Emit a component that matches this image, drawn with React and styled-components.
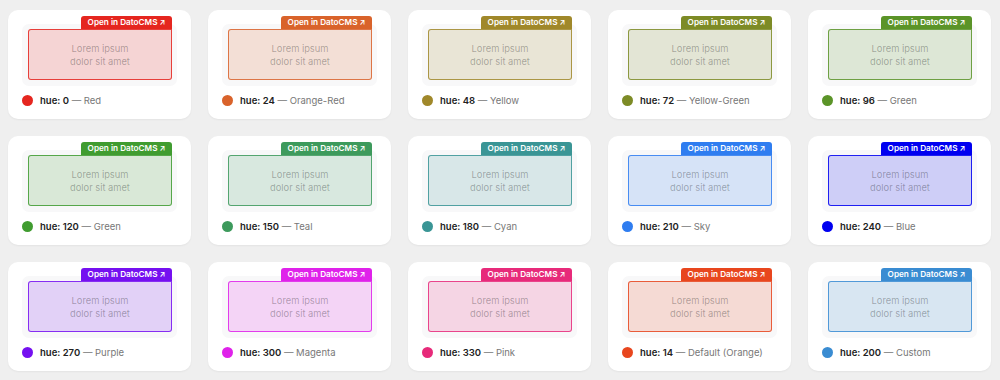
import React from "react";
import styled, { createGlobalStyle } from "styled-components";

const swatches = [
    { hue: 0, name: "Red", color: "#e5261f" },
    { hue: 24, name: "Orange-Red", color: "#d9632b" },
    { hue: 48, name: "Yellow", color: "#a0882a" },
    { hue: 72, name: "Yellow-Green", color: "#7d8b26" },
    { hue: 96, name: "Green", color: "#5b9428" },
    { hue: 120, name: "Green", color: "#409c30" },
    { hue: 150, name: "Teal", color: "#3d9a5c" },
    { hue: 180, name: "Cyan", color: "#3a9595" },
    { hue: 210, name: "Sky", color: "#2f7df0" },
    { hue: 240, name: "Blue", color: "#0000f0" },
    { hue: 270, name: "Purple", color: "#7510f0" },
    { hue: 300, name: "Magenta", color: "#df22ea" },
    { hue: 330, name: "Pink", color: "#e72a7a" },
    { hue: 14, name: "Default (Orange)", color: "#e8461e" },
    { hue: 200, name: "Custom", color: "#3a8cd2" },
];

function App() {
    return (
        <>
            <GlobalStyle />
            <Grid>
                {swatches.map((s) => (
                    <Card key={s.hue}>
                        <Preview>
                            <Frame>
                                <Tab accent={s.color}>
                                    Open in DatoCMS <Arrow>↗</Arrow>
                                </Tab>
                                <Box accent={s.color}>
                                    <span>Lorem ipsum</span>
                                    <span>dolor sit amet</span>
                                </Box>
                            </Frame>
                        </Preview>
                        <Legend>
                            <Dot accent={s.color} />
                            <Label>
                                <b>hue: {s.hue}</b> — {s.name}
                            </Label>
                        </Legend>
                    </Card>
                ))}
            </Grid>
        </>
    );
}

export default App;

const GlobalStyle = createGlobalStyle`
    body {
        margin: 0;
        background: #efefef;
        font-family: Inter, "Liberation Sans", sans-serif;
    }
`;

const Grid = styled.div`
    display: grid;
    grid-template-columns: repeat(5, 183px);
    column-gap: 17px;
    row-gap: 17px;
    padding: 10px 8px;
`;

const Card = styled.div`
    height: 109px;
    box-sizing: border-box;
    background: #fff;
    border-radius: 10px;
    box-shadow: 0 1px 2px rgba(0, 0, 0, 0.05);
    padding: 14px 14px 13px;
    display: flex;
    flex-direction: column;
`;

const Preview = styled.div`
    height: 62px;
    box-sizing: border-box;
    background: #f8f8f9;
    border-radius: 7px;
    padding: 5px 5px 6px 6px;
`;

const Frame = styled.div`
    margin-top: -13px;
    display: flex;
    flex-direction: column;
`;

const Tab = styled.div`
    align-self: flex-end;
    width: 91px;
    height: 13px;
    box-sizing: border-box;
    background: ${(p) => p.accent};
    color: #fff;
    border-radius: 3px 3px 0 0;
    font-size: 8.2px;
    font-weight: 600;
    line-height: 13px;
    text-align: center;
    white-space: nowrap;
`;

const Arrow = styled.span`
    font-size: 7.5px;
`;

const Box = styled.div`
    height: 51px;
    box-sizing: border-box;
    border: 1.2px solid ${(p) => p.accent}d9;
    border-radius: 3px 0 3px 3px;
    background: ${(p) => p.accent}2b;
    display: flex;
    flex-direction: column;
    align-items: center;
    justify-content: center;
    font-size: 9.3px;
    line-height: 13px;
    color: rgba(0, 0, 0, 0.3);
`;

const Legend = styled.div`
    margin-top: 8px;
    height: 12px;
    display: flex;
    align-items: center;
    gap: 7px;
`;

const Dot = styled.div`
    width: 11px;
    height: 11px;
    border-radius: 50%;
    background: ${(p) => p.accent};
`;

const Label = styled.div`
    font-size: 9.5px;
    color: #777;

    b {
        color: #222;
        font-weight: 600;
    }
`;
